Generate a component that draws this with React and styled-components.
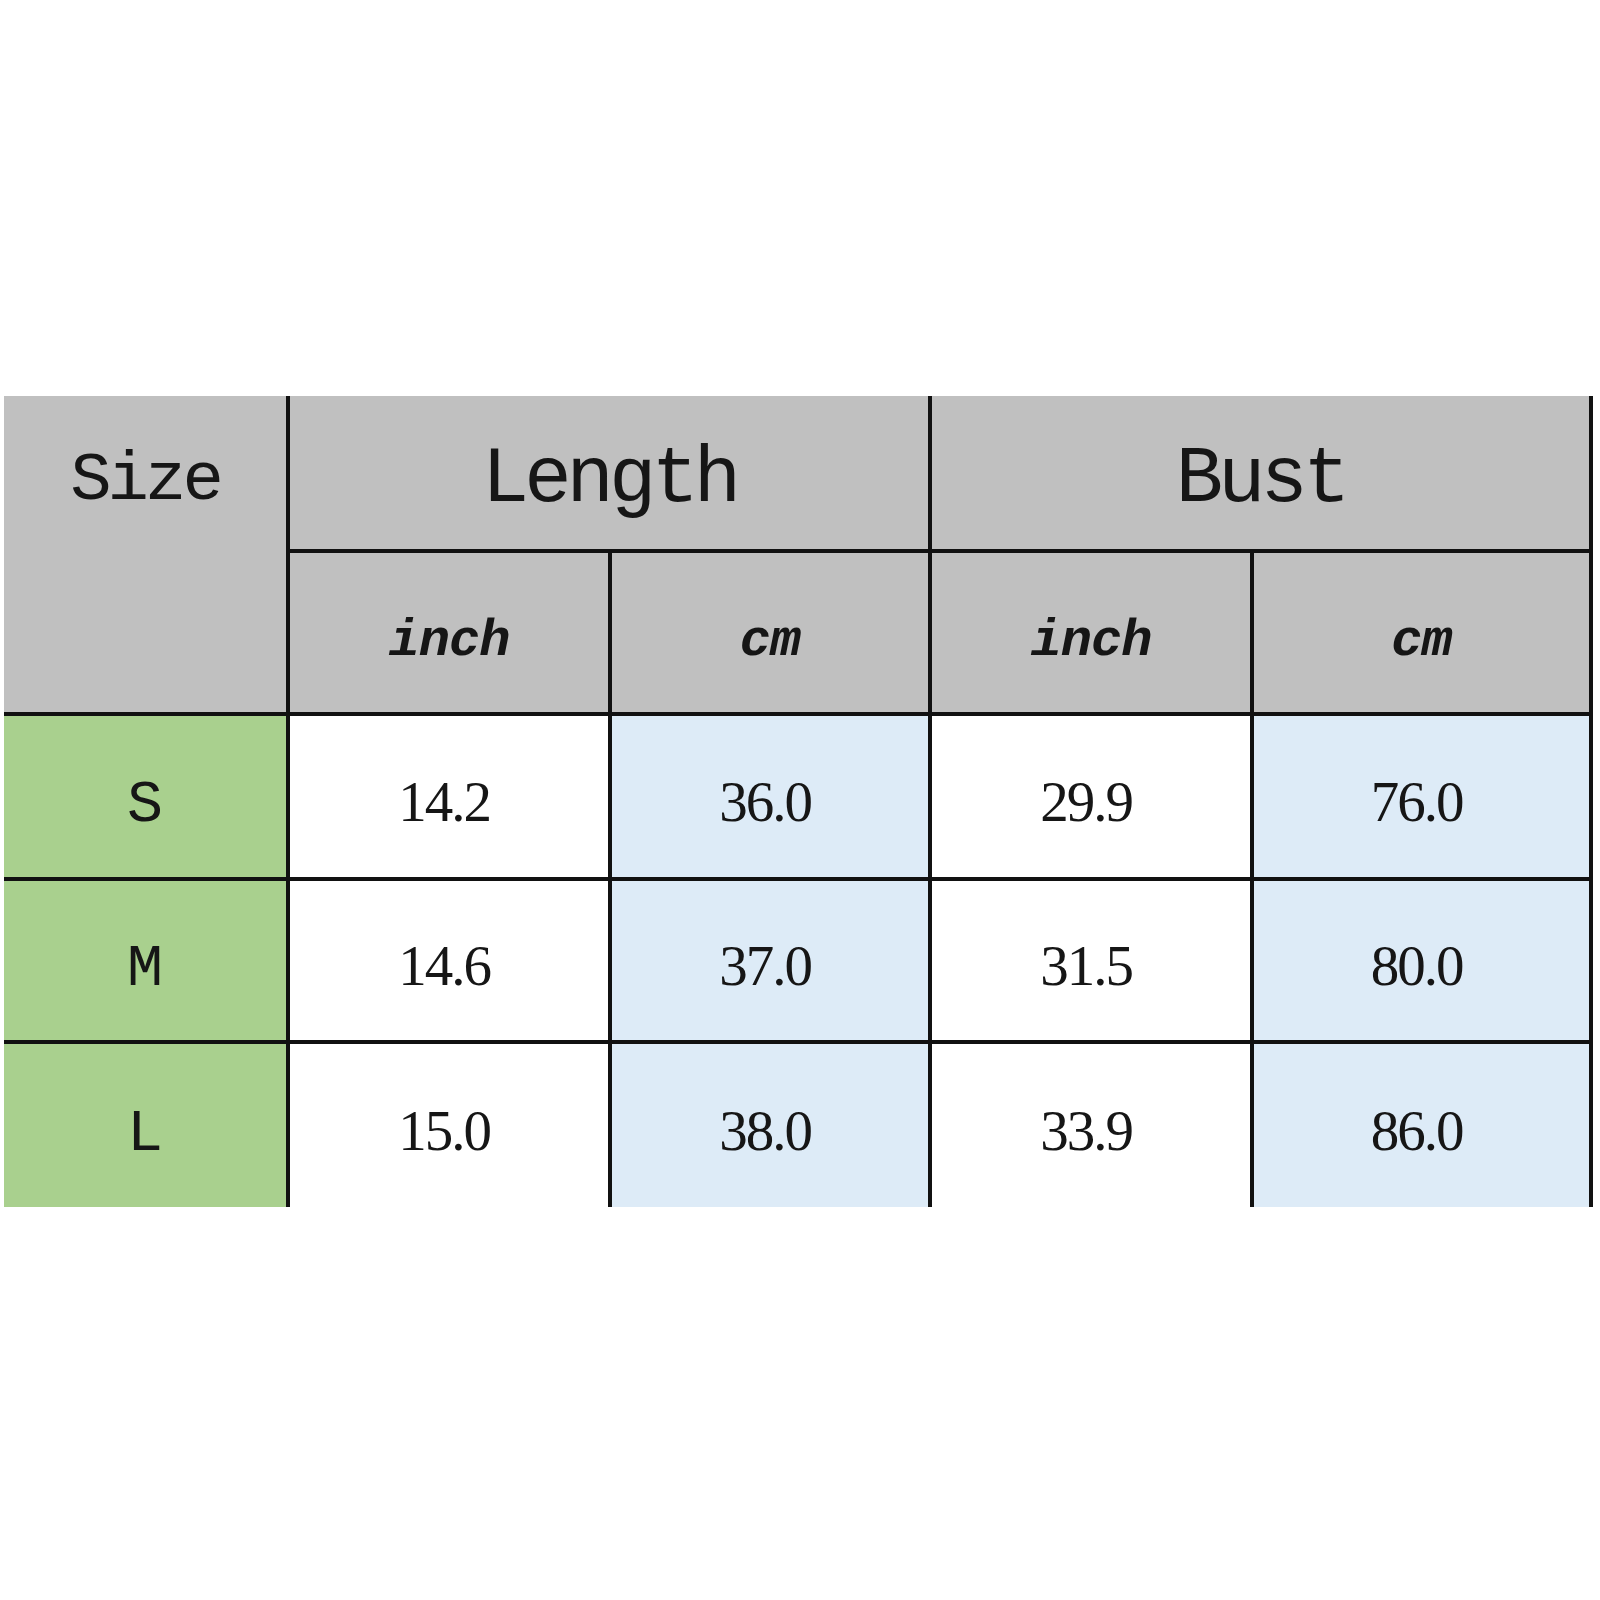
import React from 'react'
import styled, { createGlobalStyle } from 'styled-components'

const rows = [
  { size: 'S', values: ['14.2', '36.0', '29.9', '76.0'] },
  { size: 'M', values: ['14.6', '37.0', '31.5', '80.0'] },
  { size: 'L', values: ['15.0', '38.0', '33.9', '86.0'] },
]

function App() {
  return (
    <>
      <GlobalStyle />
      <Page>
        <Chart>
          <SizeHead>Size</SizeHead>
          <GroupHead>Length</GroupHead>
          <GroupHead>Bust</GroupHead>
          <UnitHead>inch</UnitHead>
          <UnitHead>cm</UnitHead>
          <UnitHead>inch</UnitHead>
          <UnitHead>cm</UnitHead>
          {rows.map((row, i) => (
            <React.Fragment key={row.size}>
              <SizeCell $bottom={i === rows.length - 1}>{row.size}</SizeCell>
              {row.values.map((v, j) => (
                <ValueCell key={j} $cm={j % 2 === 1} $bottom={i === rows.length - 1}>
                  {v}
                </ValueCell>
              ))}
            </React.Fragment>
          ))}
        </Chart>
      </Page>
    </>
  )
}

export default App

const GlobalStyle = createGlobalStyle`
  html, body {
    margin: 0;
    padding: 0;
    background: #ffffff;
  }
`

const Page = styled.div`
  width: 1600px;
  height: 1600px;
  padding: 396px 0 0 4px;
  box-sizing: border-box;
`

const Chart = styled.div`
  display: grid;
  grid-template-columns: 286px 322px 320px 322px 339px;
  grid-template-rows: 157px 163px 165px 163px 163px;
  color: #161616;
`

const Cell = styled.div`
  box-sizing: border-box;
  display: flex;
  align-items: center;
  justify-content: center;
  border-right: 4px solid #111;
  border-bottom: 4px solid #111;
`

const SizeHead = styled(Cell)`
  grid-row: span 2;
  background: #c0c0c0;
  align-items: flex-start;
  padding-top: 46px;
  font-family: "Liberation Mono", "DejaVu Sans Mono", monospace;
  font-size: 69px;
  letter-spacing: -4px;
`

const GroupHead = styled(Cell)`
  grid-column: span 2;
  background: #c0c0c0;
  font-family: "Liberation Mono", "DejaVu Sans Mono", monospace;
  font-size: 79px;
  letter-spacing: -5px;
  padding-top: 14px;
`

const UnitHead = styled(Cell)`
  background: #c0c0c0;
  font-family: "Liberation Mono", "DejaVu Sans Mono", monospace;
  font-style: italic;
  font-weight: bold;
  font-size: 52px;
  letter-spacing: -1px;
  padding-top: 18px;
`

const SizeCell = styled(Cell)`
  background: #a9d08e;
  font-family: "Liberation Mono", "DejaVu Sans Mono", monospace;
  font-size: 60px;
  padding-top: 16px;
  ${(p) => p.$bottom && 'border-bottom: none;'}
`

const ValueCell = styled(Cell)`
  background: ${(p) => (p.$cm ? '#ddebf7' : '#ffffff')};
  font-family: "Liberation Serif", "Times New Roman", serif;
  font-size: 57px;
  letter-spacing: -2px;
  padding: 10px 10px 0 0;
  ${(p) => p.$bottom && 'border-bottom: none;'}
`
